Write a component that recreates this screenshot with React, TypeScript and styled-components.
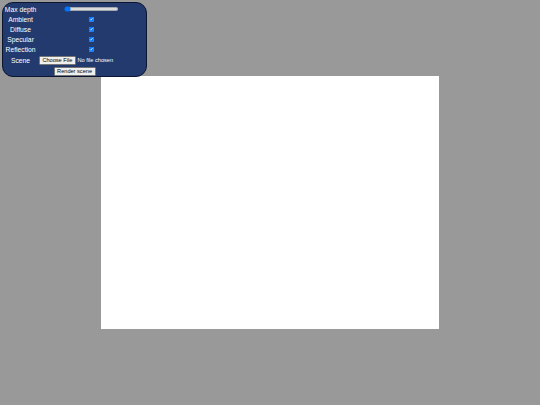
import React from "react"
import styled, { createGlobalStyle } from "styled-components"

// The page was laid out for 1280x960 and is shown scaled down to fit 540x405.
const SCALE = 540 / 1280

const GlobalStyle = createGlobalStyle`
  html, body {
    margin: 0;
    padding: 0;
    background: #999999;
    overflow: hidden;
  }
`

const Page = styled.div`
  zoom: ${SCALE};
  position: relative;
  width: 1280px;
  height: 960px;
  display: flex;
  justify-content: center;
  align-items: center;
  font-family: "Liberation Sans", Arial, sans-serif;
`

const Canvas = styled.div`
  width: 800px;
  height: 600px;
  background: #ffffff;
`

const Controls = styled.div`
  position: absolute;
  top: 5px;
  left: 5px;
  display: grid;
  grid-template-columns: max-content max-content;
  gap: 3px 4px;
  padding: 3px 3px 0;
  background: #233a6e;
  border: 2px solid #0b1530;
  border-radius: 26px;
  color: #ffffff;
  font-size: 16px;
`

const Label = styled.label`
  justify-self: center;
  align-self: center;
  padding: 1px;
`

const Cell = styled.div<{ span?: boolean }>`
  display: flex;
  justify-content: center;
  align-items: center;
  padding: 1px;
  grid-column: ${p => (p.span ? "1 / -1" : "auto")};
`

const Slider = styled.input`
  width: 129px;
  margin: 2px;
`

const Check = styled.input`
  width: 13px;
  height: 13px;
  margin: 3px;
`

const FileInput = styled.input`
  font-family: "Liberation Sans", Arial, sans-serif;
  font-size: 13.33px;
  color: #ffffff;
  width: 250px;
`

const Button = styled.button`
  font-family: "Liberation Sans", Arial, sans-serif;
  font-size: 13.33px;
  padding: 1px 6px;
`

const options = ["Ambient", "Diffuse", "Specular", "Reflection"]

const App: React.FC = () => {
  return (
    <>
      <GlobalStyle />
      <Page>
        <Controls>
          <Label htmlFor="depth">Max depth</Label>
          <Cell>
            <Slider id="depth" type="range" min={0} max={10} defaultValue={0} />
          </Cell>

          {options.map(name => (
            <React.Fragment key={name}>
              <Label htmlFor={name}>{name}</Label>
              <Cell>
                <Check id={name} type="checkbox" defaultChecked />
              </Cell>
            </React.Fragment>
          ))}

          <Label htmlFor="scene">Scene</Label>
          <Cell>
            <FileInput id="scene" type="file" />
          </Cell>

          <Cell span>
            <Button>Render scene</Button>
          </Cell>
        </Controls>
        <Canvas />
      </Page>
    </>
  )
}

export default App
